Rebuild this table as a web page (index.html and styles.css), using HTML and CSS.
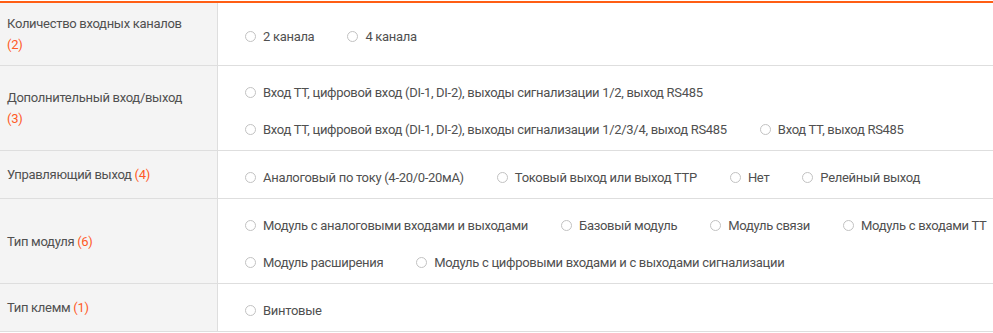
FILE: index.html
```html
<!DOCTYPE html>
<html lang="ru">
<head>
<meta charset="utf-8">
<title>Фильтр</title>
<link rel="stylesheet" href="styles.css">
</head>
<body>
<div class="filters">
  <div class="row">
    <div class="name"><div>Количество входных каналов <span class="count">(2)</span></div></div>
    <div class="values">
      <label class="option"><input type="radio" class="radio" name="f1"><span>2 канала</span></label>
      <label class="option"><input type="radio" class="radio" name="f1"><span>4 канала</span></label>
    </div>
  </div>
  <div class="row">
    <div class="name"><div>Дополнительный вход/выход <span class="count">(3)</span></div></div>
    <div class="values">
      <label class="option"><input type="radio" class="radio" name="f2"><span>Вход ТТ, цифровой вход (DI-1, DI-2), выходы сигнализации 1/2, выход RS485</span></label>
      <label class="option"><input type="radio" class="radio" name="f2"><span>Вход ТТ, цифровой вход (DI-1, DI-2), выходы сигнализации 1/2/3/4, выход RS485</span></label>
      <label class="option"><input type="radio" class="radio" name="f2"><span>Вход ТТ, выход RS485</span></label>
    </div>
  </div>
  <div class="row">
    <div class="name"><div>Управляющий выход <span class="count">(4)</span></div></div>
    <div class="values">
      <label class="option"><input type="radio" class="radio" name="f3"><span>Аналоговый по току (4-20/0-20мА)</span></label>
      <label class="option"><input type="radio" class="radio" name="f3"><span>Токовый выход или выход ТТР</span></label>
      <label class="option"><input type="radio" class="radio" name="f3"><span>Нет</span></label>
      <label class="option"><input type="radio" class="radio" name="f3"><span>Релейный выход</span></label>
    </div>
  </div>
  <div class="row">
    <div class="name"><div>Тип модуля <span class="count">(6)</span></div></div>
    <div class="values">
      <label class="option"><input type="radio" class="radio" name="f4"><span>Модуль с аналоговыми входами и выходами</span></label>
      <label class="option"><input type="radio" class="radio" name="f4"><span>Базовый модуль</span></label>
      <label class="option"><input type="radio" class="radio" name="f4"><span>Модуль связи</span></label>
      <label class="option"><input type="radio" class="radio" name="f4"><span>Модуль с входами ТТ</span></label>
      <label class="option"><input type="radio" class="radio" name="f4"><span>Модуль расширения</span></label>
      <label class="option"><input type="radio" class="radio" name="f4"><span>Модуль с цифровыми входами и с выходами сигнализации</span></label>
    </div>
  </div>
  <div class="row">
    <div class="name"><div>Тип клемм <span class="count">(1)</span></div></div>
    <div class="values">
      <label class="option"><input type="radio" class="radio" name="f5"><span>Винтовые</span></label>
    </div>
  </div>
</div>
</body>
</html>
```
FILE: styles.css
```css
html, body {
  margin: 0;
  padding: 0;
  background: #fff;
}
body {
  padding-top: 1px;
  font-family: Roboto, "Noto Sans", Arial, sans-serif;
  font-size: 13px;
  letter-spacing: -0.3px;
  color: #505050;
}
.filters {
  border-top: 2px solid #ff5e14;
}
.row {
  display: grid;
  grid-template-columns: 218px 1fr;
  border-bottom: 1px solid #dedede;
}
.name {
  box-sizing: border-box;
  background: #f4f4f4;
  border-right: 1px solid #dedede;
  padding: 10px 26px 10px 7px;
  line-height: 21px;
  display: flex;
  align-items: center;
}
.count {
  color: #ff5a26;
}
.values {
  align-self: center;
  display: flex;
  flex-wrap: wrap;
  row-gap: 7px;
  column-gap: 33px;
  padding: 11px 0 6px 27px;
}
.option {
  display: flex;
  align-items: center;
  height: 30px;
  cursor: pointer;
}
.radio {
  appearance: none;
  -webkit-appearance: none;
  box-sizing: border-box;
  width: 11px;
  height: 11px;
  margin: 0 7px 0 0;
  border: 1px solid #c2c2c2;
  border-radius: 50%;
  background: #fff;
}
```
